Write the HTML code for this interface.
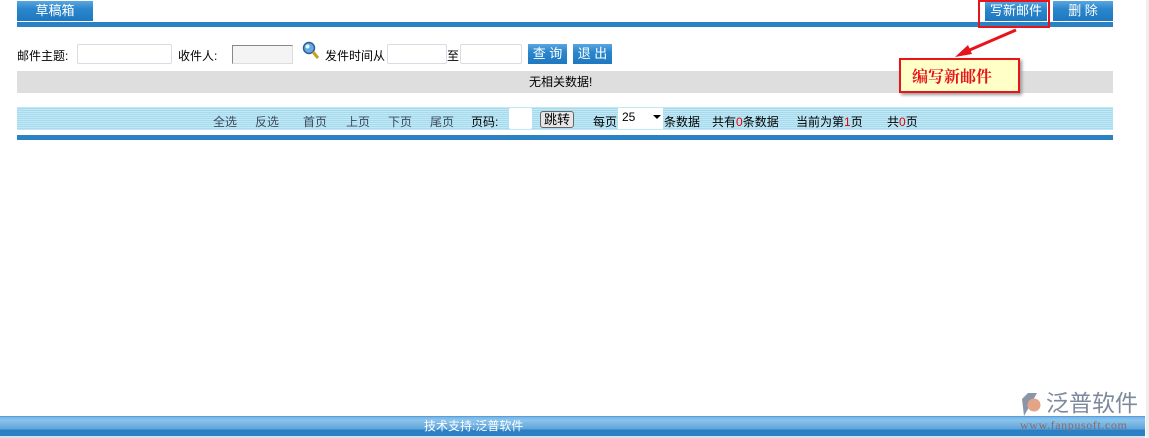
<!DOCTYPE html>
<html><head><meta charset="utf-8">
<style>
*{margin:0;padding:0;box-sizing:border-box}
body{width:1149px;height:438px;background:#fff;position:relative;overflow:hidden;font-family:"Liberation Sans","Noto Sans CJK SC","WenQuanYi Zen Hei",sans-serif;font-size:12px;color:#000}
.a{position:absolute;white-space:nowrap;line-height:14px}
.btn{position:absolute;background:linear-gradient(#5aa6e0 0%,#2a86cc 40%,#1f78c0 100%);color:#fff;text-align:center;font-size:13px}
.inp{position:absolute;background:#fff;border:1px solid #d8dce4;border-radius:2px}
.pl{color:#3d4a5c}
</style></head><body>
<div class="btn" style="left:17px;top:1px;width:76px;height:20px;line-height:20px;font-size:13px">草稿箱</div>
<div class="btn" style="left:985px;top:1px;width:62px;height:20px;line-height:20px">写新邮件</div>
<div class="btn" style="left:1053px;top:1px;width:60px;height:20px;line-height:20px">删 除</div>
<div style="position:absolute;left:17px;top:22px;width:1096px;height:5px;background:#2a82c4"></div>
<div style="position:absolute;left:978px;top:0;width:72px;height:28px;border:2px solid #e8141c"></div>

<div class="a" style="left:17px;top:49px;font-size:12px">邮件主题:</div>
<div class="inp" style="left:77px;top:44px;width:95px;height:20px"></div>
<div class="a" style="left:178px;top:49px">收件人:</div>
<div style="position:absolute;left:232px;top:45px;width:61px;height:19px;background:#f4f4f4;border:1px solid #888;border-right-color:#ddd;border-bottom-color:#ddd"></div>
<svg style="position:absolute;left:302px;top:41px" width="18" height="20"><circle cx="7" cy="7" r="5.5" fill="#6aa8e0" stroke="#2c5f99" stroke-width="1.5"/><circle cx="5.5" cy="5.5" r="2" fill="#dff"/><line x1="11" y1="11" x2="16" y2="17" stroke="#c8a020" stroke-width="3"/></svg>
<div class="a" style="left:325px;top:49px">发件时间从</div>
<div class="inp" style="left:387px;top:44px;width:60px;height:20px"></div>
<div class="a" style="left:447px;top:49px">至</div>
<div class="inp" style="left:460px;top:44px;width:62px;height:20px"></div>
<div class="btn" style="left:528px;top:44px;width:39px;height:20px;line-height:20px">查 询</div>
<div class="btn" style="left:573px;top:44px;width:39px;height:20px;line-height:20px">退 出</div>

<div style="position:absolute;left:17px;top:71px;width:1096px;height:22px;background:#dedede"></div>
<div class="a" style="left:529px;top:75px">无相关数据!</div>

<div style="position:absolute;left:17px;top:107px;width:1096px;height:23px;background:repeating-linear-gradient(#c2e8f4 0,#c2e8f4 1px,#a6daee 1px,#a6daee 2px)"></div>
<div class="a pl" style="left:213px;top:115px">全选</div>
<div class="a pl" style="left:255px;top:115px">反选</div>
<div class="a pl" style="left:303px;top:115px">首页</div>
<div class="a pl" style="left:346px;top:115px">上页</div>
<div class="a pl" style="left:388px;top:115px">下页</div>
<div class="a pl" style="left:430px;top:115px">尾页</div>
<div class="a" style="left:471px;top:115px">页码:</div>
<div style="position:absolute;left:509px;top:108px;width:23px;height:21px;background:#fff;border-radius:2px"></div>
<div style="position:absolute;left:540px;top:111px;width:34px;height:17px;background:#e6e6e6;border:1px solid #666;border-radius:3px;text-align:center;line-height:15px;font-size:13px">跳转</div>
<div class="a" style="left:593px;top:115px">每页</div>
<div style="position:absolute;left:618px;top:108px;width:45px;height:21px;background:#fff;font-size:12px;line-height:18px;padding-left:4px">25<span style="position:absolute;left:35px;top:7px;border-left:4px solid transparent;border-right:4px solid transparent;border-top:4px solid #000"></span></div>
<div class="a" style="left:664px;top:115px">条数据</div>
<div class="a" style="left:712px;top:115px">共有<span style="color:#e00">0</span>条数据</div>
<div class="a" style="left:796px;top:115px">当前为第<span style="color:#e00">1</span>页</div>
<div class="a" style="left:887px;top:115px">共<span style="color:#e00">0</span>页</div>
<div style="position:absolute;left:17px;top:135px;width:1096px;height:5px;background:#2a82c4"></div>

<svg style="position:absolute;left:0;top:0" width="1149" height="438">
<line x1="1016" y1="30" x2="965" y2="52" stroke="#e8141c" stroke-width="3"/>
<polygon points="955,57 968,45 972,54" fill="#e8141c"/>
</svg>
<div style="position:absolute;left:899px;top:58px;width:121px;height:35px;background:#ffffc8;border:2px solid #e8141c;box-shadow:2px 2px 3px #999;color:#e8141c;font-weight:bold;font-size:16px;line-height:31px;padding-left:11px;font-family:'Noto Serif CJK SC',serif">编写新邮件</div>

<div style="position:absolute;left:0;top:416px;width:1145px;height:20px;background:linear-gradient(#72b4e6 0,#8cc4ea 3px,#5ea4dc 12px,#2a80c2 13px,#2a80c2 20px);border-top:1px solid #5a9ee0"></div>
<div style="position:absolute;left:0;top:436px;width:1145px;height:2px;background:#dde"></div>
<div class="a" style="left:424px;top:419px;color:#fff">技术支持:泛普软件</div>
<div style="position:absolute;left:1146px;top:0;width:3px;height:438px;background:#eee"></div>
<svg style="position:absolute;left:1018px;top:393px" width="26" height="24"><polygon points="4,6 10,0 19,0 6,23" fill="#8a96a8"/><circle cx="16" cy="12" r="6.5" fill="#e4a488"/></svg>
<div class="a" style="left:1046px;top:391px;font-size:23px;line-height:25px;color:#7d8a9c">泛普软件</div>
<div class="a" style="left:1020px;top:418px;font-size:12px;color:#8a6a6a;font-family:'Liberation Serif',serif;letter-spacing:0.6px">www.fanpusoft.com</div>
</body></html>
